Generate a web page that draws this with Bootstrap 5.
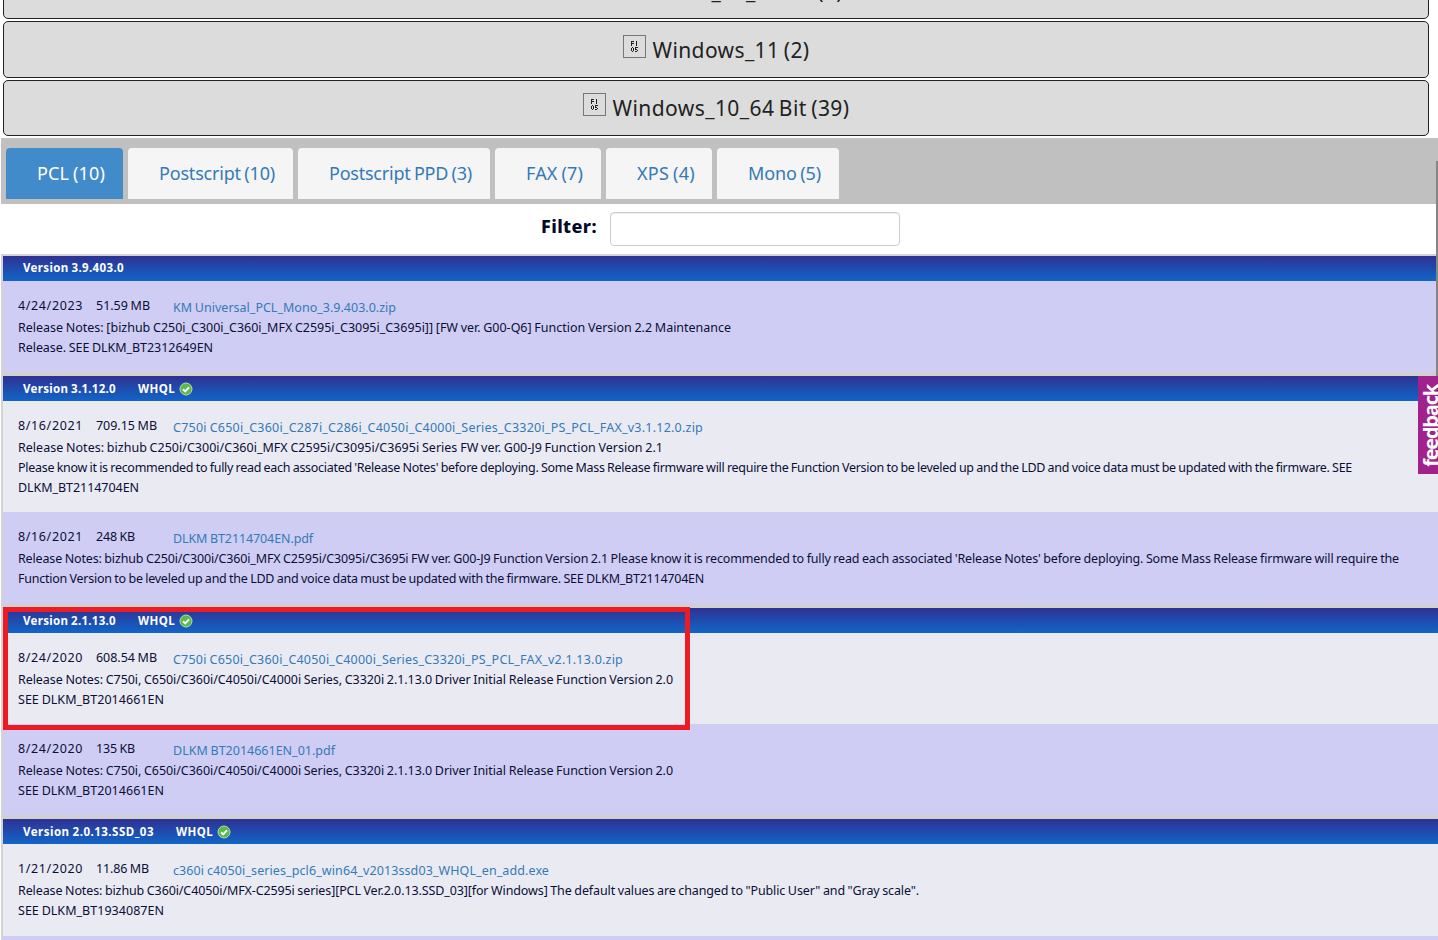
<!DOCTYPE html>
<html lang="en">
<head>
<meta charset="utf-8">
<meta name="viewport" content="width=device-width, initial-scale=1">
<title>Driver downloads</title>
<link href="https://cdn.jsdelivr.net/npm/bootstrap@5.3.0/dist/css/bootstrap.min.css" rel="stylesheet">
<style>
body{font-family:"Noto Sans",sans-serif;font-size:12.5px;line-height:20px;color:#0b0f35;height:940px;overflow:hidden;background:#fff;word-spacing:-.5px}
.os-list{margin:-38px 9px 0 3px;gap:2px}
.os-btn{height:57px;border:1px solid #222;border-radius:5px;background:#dcdcdc;color:#222;font-size:21px;line-height:30px;padding:1px 0 0;word-spacing:-1.5px}
.os-btn:last-child{height:56px;padding:0 0 1px}
.os-btn svg{width:23px;height:23px;margin-right:7px;margin-top:-7px}
.tabs-bar{background:#c0c0c0;height:66px;margin:2px 0 0 1px;padding:10px 5px 5px;gap:5px;word-spacing:-1px}
.tabs-bar .nav-link{height:51px;background:#f5f5f5;color:#337ab7;border-radius:4px 4px 0 0;font-size:18px;line-height:51px;padding:0 0 0 31px}
.tabs-bar .nav-link.active{background:#428bca;color:#fff}
.t1{width:117px}.t2{width:165px}.t3{width:192px}.t4{width:106px}.t5{width:106px}.t6{width:122px}
.filter-row{height:50px;padding:8px 0 0 541px}
.filter-row label{font-size:18px;font-weight:800;line-height:28px;width:69px;color:#060a2a}
.filter-row input{width:290px;height:34px;border:1px solid #ccc;border-radius:4px;box-shadow:inset 0 1px 1px rgba(0,0,0,.075)}
.versions{margin-left:1px;border-left:2px solid #d3d3d3;border-top:2px solid #d3d3d3}
.ver-head{height:25px;padding-left:20px;background:linear-gradient(#2e3192,#1166c9);color:#fff;font-weight:700;font-size:11.5px;line-height:24px}
.ver-head .whql{margin-left:22px}
.ver-head svg{width:14px;height:14px;margin-left:4px;margin-top:0}
.ver-group + .ver-group{border-top:4px solid #d0d0d0}
.entry{padding:15px 0 14px 15px;background:#eaeaf3}
.entry.alt{background:#cfcdf4}
.entry.long{padding-bottom:15px}
.entry .meta{height:22px}
.entry .date{width:78px}.entry .size{width:77px}
.entry a{color:#337ab7;text-decoration:none;padding-top:2px}
[data-w]{white-space:pre}
.marker{left:0;top:-1px;width:687px;height:123px;border:5px solid #ed1c24}
.feedback{right:0;top:376px;width:20px;height:98px;background:#a1228d;overflow:hidden}
.feedback span{position:absolute;left:2px;bottom:7px;writing-mode:vertical-rl;transform:rotate(180deg);color:#fff;font:700 20px/22px "Open Sans",sans-serif;letter-spacing:-1.2px}
.edge{right:0;top:161px;width:2px;height:226px;background:#858585}
</style>
</head>
<body class="position-relative">
<svg class="d-none" xmlns="http://www.w3.org/2000/svg">
 <symbol id="glyph" viewBox="0 0 23 23"><rect x=".5" y=".5" width="22" height="22" fill="none" stroke="#777"/><path shape-rendering="crispEdges" fill="none" stroke="#222" d="M8.500 6v5M9 6.500h2M9 8.500h2M13.500 6v5M8.500 13v3M9 12.500h1M9 16.500h1M10.500 13v3M12 12.500h3M12.500 13v2M13 14.500h1M14.500 15v1M12 16.500h2"/></symbol>
 <symbol id="check" viewBox="0 0 14 14"><circle cx="7" cy="7" r="6" fill="#58b947" stroke="#b9dfaf"/><path d="M4 7.200l2.200 2.200 3.900-4.200" fill="none" stroke="#fff" stroke-width="2"/></symbol>
</svg>

<div class="os-list d-flex flex-column">
 <button class="os-btn d-flex align-items-center justify-content-center"><svg><use href="#glyph"/></svg><span data-w="224">Windows_10_32 Bit (9)</span></button>
 <button class="os-btn d-flex align-items-center justify-content-center"><svg><use href="#glyph"/></svg><span data-w="157">Windows_11 (2)</span></button>
 <button class="os-btn d-flex align-items-center justify-content-center"><svg><use href="#glyph"/></svg><span data-w="237">Windows_10_64 Bit (39)</span></button>
</div>

<nav class="tabs-bar nav flex-nowrap">
 <a class="nav-link active t1" href="#"><span data-w="68">PCL (10)</span></a>
 <a class="nav-link t2" href="#"><span data-w="116">Postscript (10)</span></a>
 <a class="nav-link t3" href="#"><span data-w="143">Postscript PPD (3)</span></a>
 <a class="nav-link t4" href="#"><span data-w="57">FAX (7)</span></a>
 <a class="nav-link t5" href="#"><span data-w="58">XPS (4)</span></a>
 <a class="nav-link t6" href="#"><span data-w="73">Mono (5)</span></a>
</nav>

<div class="filter-row d-flex"><label for="filter"><span data-w="56">Filter:</span></label><input id="filter" type="text"></div>

<main class="versions">
 <section class="ver-group">
  <div class="ver-head d-flex"><span data-w="101">Version 3.9.403.0</span></div>
  <div class="entry alt">
   <div class="meta d-flex"><div class="date"><span data-w="65">4/24/2023</span></div><div class="size"><span data-w="54">51.59 MB</span></div><a href="#"><span data-w="223">KM Universal_PCL_Mono_3.9.403.0.zip</span></a></div>
   <div><span data-w="713">Release Notes: [bizhub C250i_C300i_C360i_MFX C2595i_C3095i_C3695i]] [FW ver. G00-Q6] Function Version 2.2 Maintenance</span></div>
   <div><span data-w="195">Release. SEE DLKM_BT2312649EN</span></div>
  </div>
 </section>
 <section class="ver-group">
  <div class="ver-head d-flex align-items-center"><span data-w="93">Version 3.1.12.0</span><span class="whql" data-w="37">WHQL</span><svg><use href="#check"/></svg></div>
  <div class="entry">
   <div class="meta d-flex"><div class="date"><span data-w="65">8/16/2021</span></div><div class="size"><span data-w="61">709.15 MB</span></div><a href="#"><span data-w="530">C750i C650i_C360i_C287i_C286i_C4050i_C4000i_Series_C3320i_PS_PCL_FAX_v3.1.12.0.zip</span></a></div>
   <div><span data-w="645">Release Notes: bizhub C250i/C300i/C360i_MFX C2595i/C3095i/C3695i Series FW ver. G00-J9 Function Version 2.1</span></div>
   <div><span data-w="1334">Please know it is recommended to fully read each associated 'Release Notes' before deploying. Some Mass Release firmware will require the Function Version to be leveled up and the LDD and voice data must be updated with the firmware. SEE</span></div>
   <div><span data-w="121">DLKM_BT2114704EN</span></div>
  </div>
  <div class="entry alt long">
   <div class="meta d-flex"><div class="date"><span data-w="65">8/16/2021</span></div><div class="size"><span data-w="39">248 KB</span></div><a href="#"><span data-w="140">DLKM BT2114704EN.pdf</span></a></div>
   <div><span data-w="1381">Release Notes: bizhub C250i/C300i/C360i_MFX C2595i/C3095i/C3695i FW ver. G00-J9 Function Version 2.1 Please know it is recommended to fully read each associated 'Release Notes' before deploying. Some Mass Release firmware will require the</span></div>
   <div><span data-w="686">Function Version to be leveled up and the LDD and voice data must be updated with the firmware. SEE DLKM_BT2114704EN</span></div>
  </div>
 </section>
 <section class="ver-group">
  <div class="position-relative">
   <div class="ver-head d-flex align-items-center"><span data-w="93">Version 2.1.13.0</span><span class="whql" data-w="37">WHQL</span><svg><use href="#check"/></svg></div>
   <div class="entry">
    <div class="meta d-flex"><div class="date"><span data-w="65">8/24/2020</span></div><div class="size"><span data-w="61">608.54 MB</span></div><a href="#"><span data-w="450">C750i C650i_C360i_C4050i_C4000i_Series_C3320i_PS_PCL_FAX_v2.1.13.0.zip</span></a></div>
    <div><span data-w="655">Release Notes: C750i, C650i/C360i/C4050i/C4000i Series, C3320i 2.1.13.0 Driver Initial Release Function Version 2.0</span></div>
    <div><span data-w="146">SEE DLKM_BT2014661EN</span></div>
   </div>
   <div class="marker position-absolute"></div>
  </div>
  <div class="entry alt">
   <div class="meta d-flex"><div class="date"><span data-w="65">8/24/2020</span></div><div class="size"><span data-w="39">135 KB</span></div><a href="#"><span data-w="162">DLKM BT2014661EN_01.pdf</span></a></div>
   <div><span data-w="655">Release Notes: C750i, C650i/C360i/C4050i/C4000i Series, C3320i 2.1.13.0 Driver Initial Release Function Version 2.0</span></div>
   <div><span data-w="146">SEE DLKM_BT2014661EN</span></div>
  </div>
 </section>
 <section class="ver-group">
  <div class="ver-head d-flex align-items-center"><span data-w="131">Version 2.0.13.SSD_03</span><span class="whql" data-w="37">WHQL</span><svg><use href="#check"/></svg></div>
  <div class="entry long">
   <div class="meta d-flex"><div class="date"><span data-w="65">1/21/2020</span></div><div class="size"><span data-w="53">11.86 MB</span></div><a href="#"><span data-w="376">c360i c4050i_series_pcl6_win64_v2013ssd03_WHQL_en_add.exe</span></a></div>
   <div><span data-w="901">Release Notes: bizhub C360i/C4050i/MFX-C2595i series][PCL Ver.2.0.13.SSD_03][for Windows] The default values are changed to "Public User" and "Gray scale".</span></div>
   <div><span data-w="146">SEE DLKM_BT1934087EN</span></div>
  </div>
  <div class="entry alt"></div>
 </section>
</main>

<div class="edge position-absolute"></div>
<div class="feedback position-absolute"><span>feedback</span></div>

<script src="https://cdn.jsdelivr.net/npm/bootstrap@5.3.0/dist/js/bootstrap.bundle.min.js"></script>
<script>
document.querySelectorAll('[data-w]').forEach(function (el) {
  var n = el.textContent.length, w = el.getBoundingClientRect().width;
  var s = (parseFloat(el.dataset.w) - w) / n;
  el.style.letterSpacing = s.toFixed(4) + 'px';
});
</script>
</body>
</html>
